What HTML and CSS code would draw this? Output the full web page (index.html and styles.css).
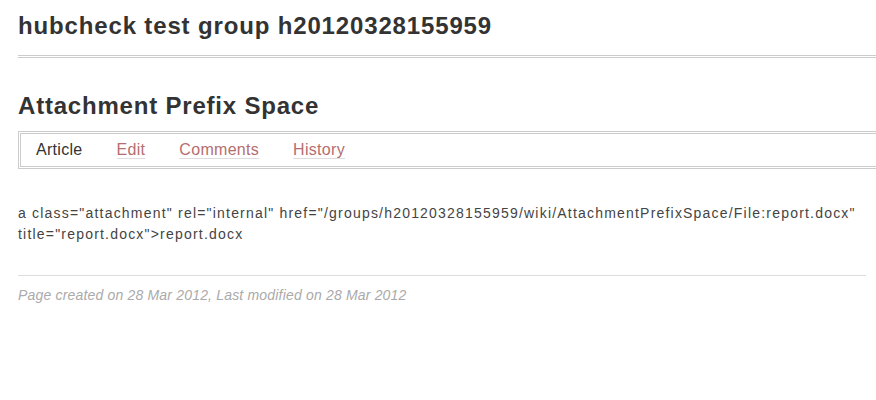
FILE: index.html
```html
<!DOCTYPE html>
<html>
<head>
<meta charset="utf-8">
<link rel="stylesheet" href="styles.css">
</head>
<body>
<div class="page">
  <h1 class="group-title">hubcheck test group h20120328155959</h1>
  <h2 class="wiki-title">Attachment Prefix Space</h2>
  <ul class="tabs">
    <li class="tab active">Article</li>
    <li class="tab"><a href="#">Edit</a></li>
    <li class="tab"><a href="#">Comments</a></li>
    <li class="tab"><a href="#">History</a></li>
  </ul>
  <div class="content">
    <p>a class="attachment" rel="internal" href="/groups/h20120328155959/wiki/AttachmentPrefixSpace/File:report.docx" title="report.docx"&gt;report.docx</p>
  </div>
  <p class="meta">Page created on 28 Mar 2012, Last modified on 28 Mar 2012</p>
</div>
</body>
</html>
```
FILE: styles.css
```css
html, body {
  margin: 0;
  padding: 0;
  background: #fff;
  overflow: hidden;
}
body {
  font-family: "Liberation Sans", Arial, sans-serif;
  color: #333;
}
.page {
  padding: 10px 0 0 18px;
}
.group-title {
  margin: 0 -20px 0 0;
  font-size: 24px;
  font-weight: bold;
  letter-spacing: 0.85px;
  color: #333;
  line-height: 32px;
  padding-bottom: 13px;
  border-bottom: 3px double #ccc;
}
.wiki-title {
  margin: 33px 0 0 0;
  font-size: 24px;
  font-weight: bold;
  letter-spacing: 0.8px;
  color: #333;
  line-height: 30px;
}
.tabs {
  list-style: none;
  margin: 10px -20px 0 0;
  padding: 0 0 0 15px;
  border: 3px double #ccc;
  height: 32px;
  display: flex;
  align-items: center;
}
.tab {
  font-size: 16px;
  letter-spacing: 0.3px;
  margin-right: 34px;
  line-height: 20px;
}
.tab.active {
  color: #333;
}
.tab a {
  color: #b46e6e;
  text-decoration: none;
  border-bottom: 1px solid #ddd;
}
.content {
  padding-top: 34px;
  margin-right: 10px;
}
.content p {
  margin: 0;
  font-size: 14px;
  letter-spacing: 1.2px;
  line-height: 21px;
  color: #444;
}
.meta {
  margin: 30px 10px 0 0;
  border-top: 1px solid #ddd;
  padding-top: 11px;
  font-size: 14px;
  letter-spacing: 0.18px;
  font-style: italic;
  color: #aaa;
}
```
